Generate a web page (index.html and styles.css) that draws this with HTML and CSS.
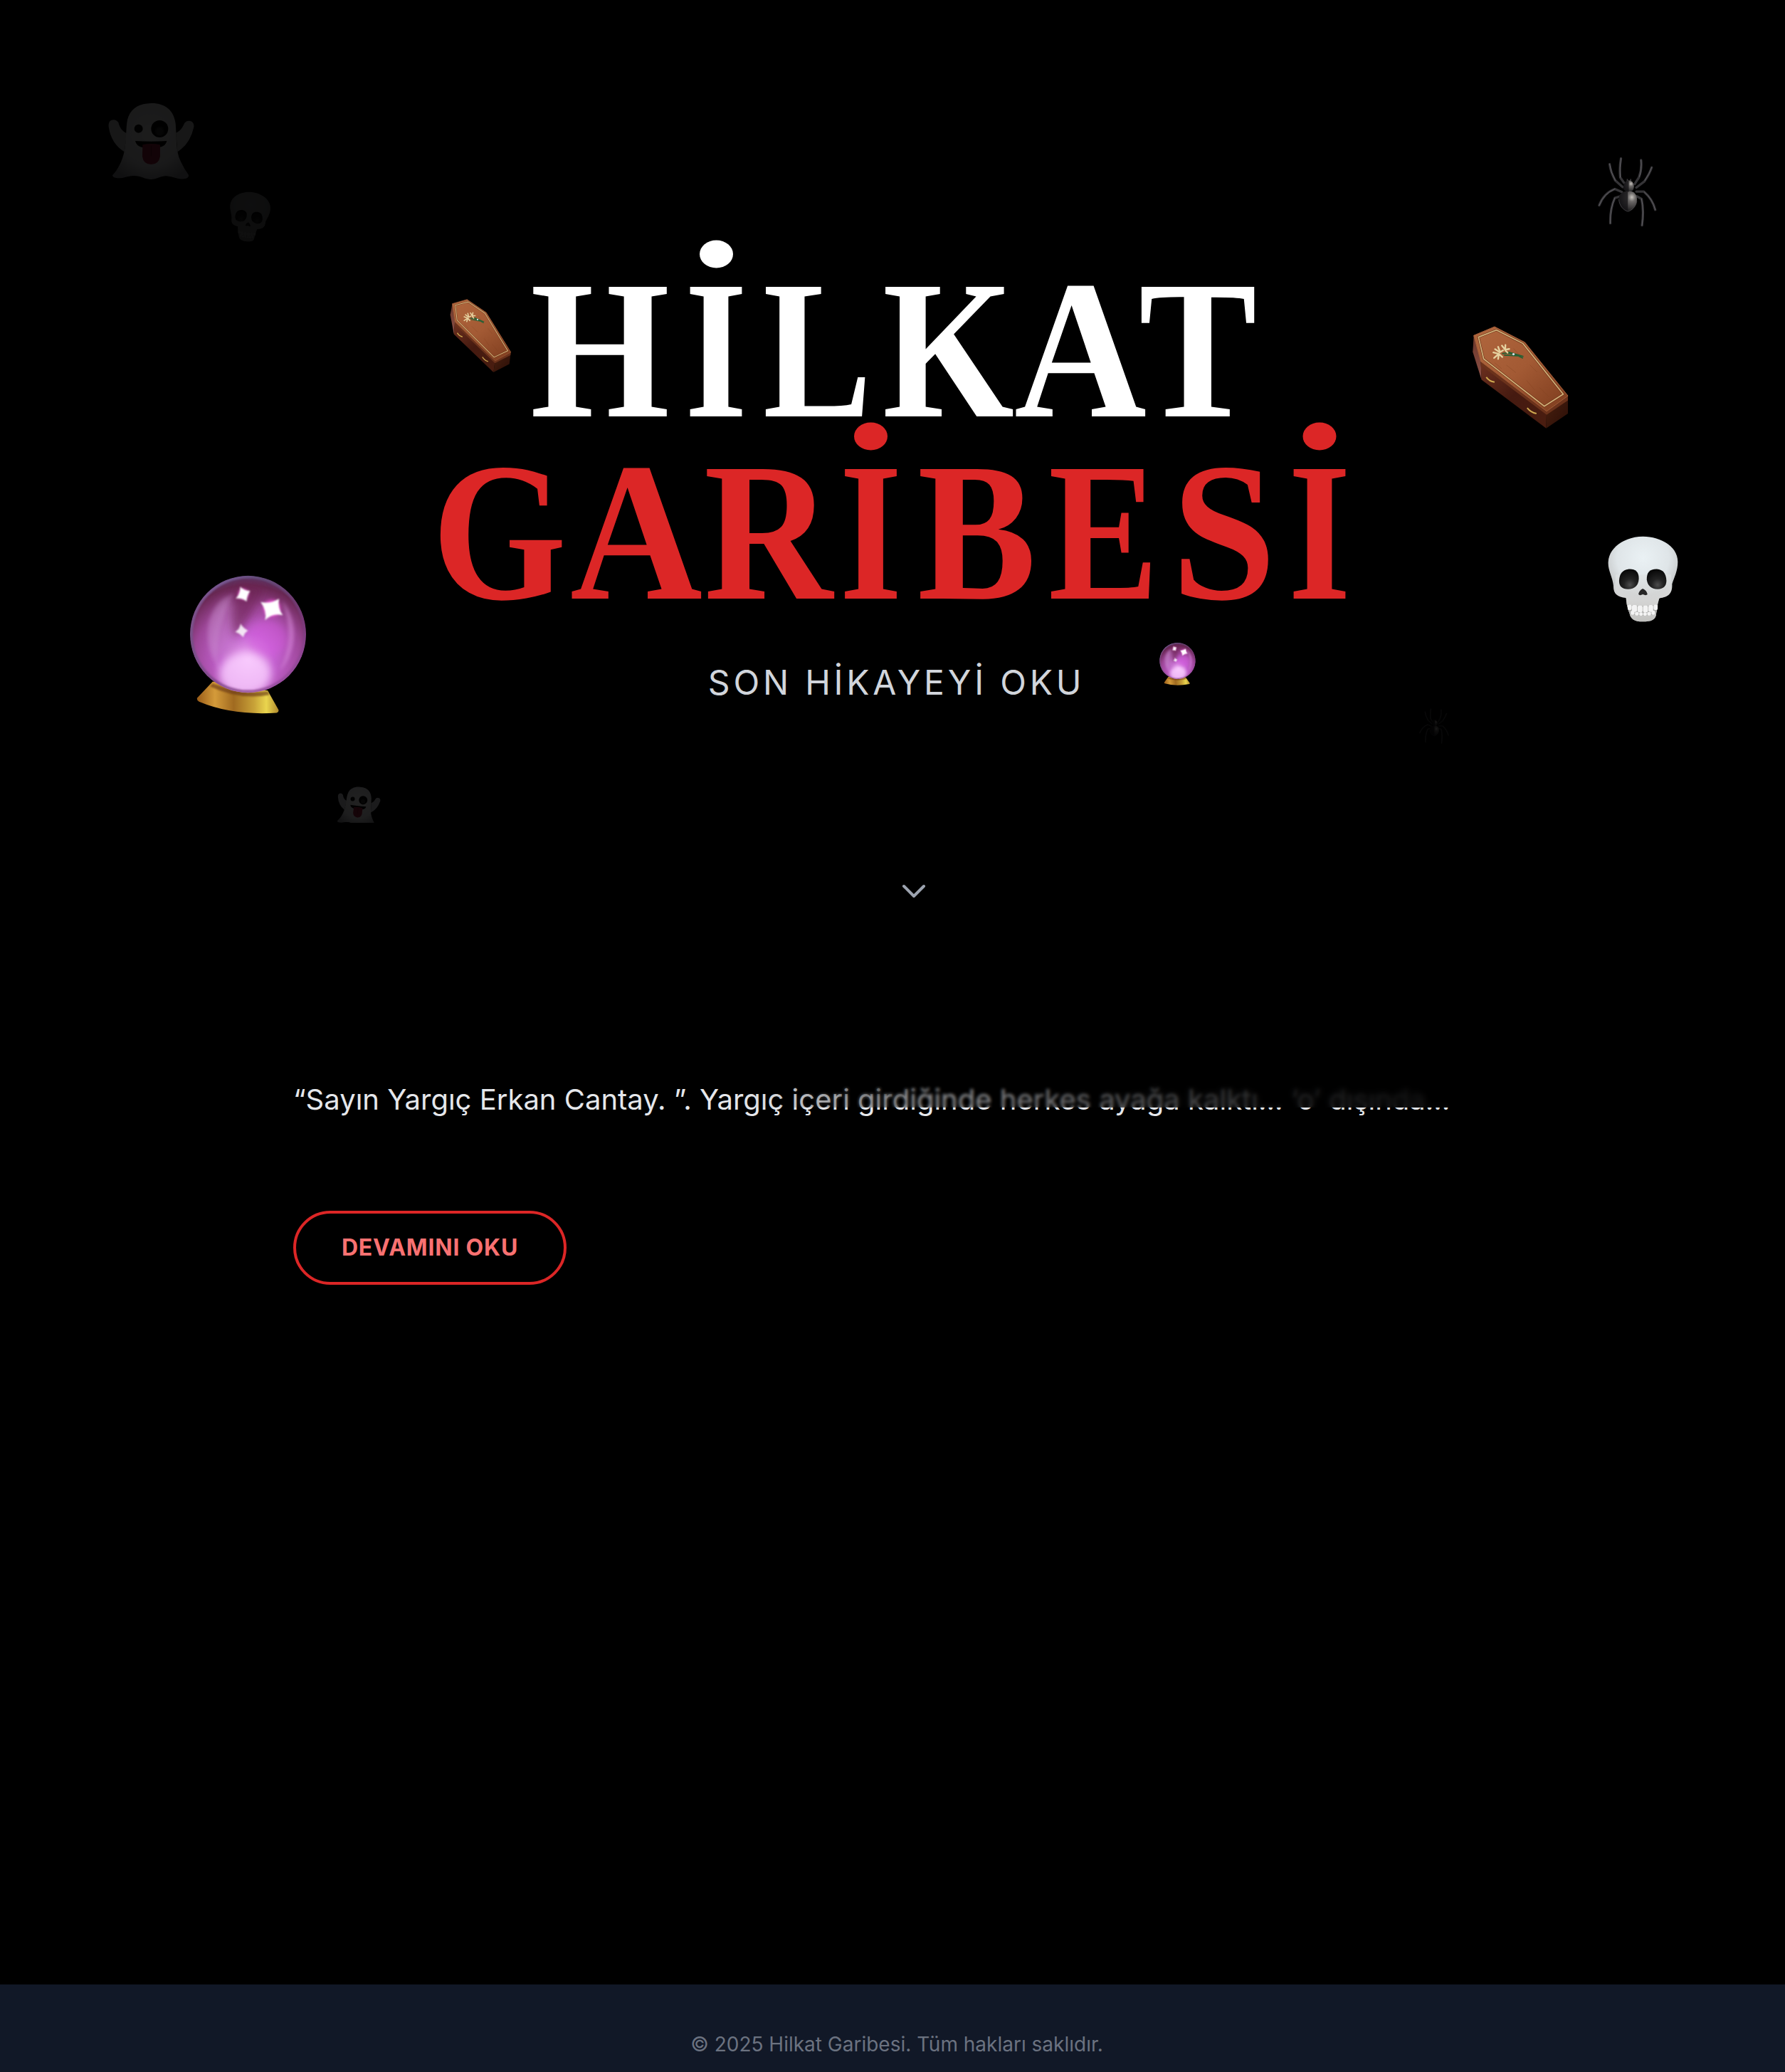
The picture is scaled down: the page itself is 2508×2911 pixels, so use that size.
FILE: index.html
```html
<!DOCTYPE html>
<html lang="tr">
<head>
<meta charset="utf-8">
<title>Hilkat Garibesi</title>
<link rel="stylesheet" href="styles.css">
</head>
<body>
<svg class="defs" width="0" height="0" aria-hidden="true">
  <defs>
    <filter id="soft2" x="-30%" y="-30%" width="160%" height="160%"><feGaussianBlur stdDeviation="3"/></filter>
    <filter id="soft6" x="-50%" y="-50%" width="200%" height="200%"><feGaussianBlur stdDeviation="8"/></filter>
    <filter id="soft18" x="-50%" y="-50%" width="200%" height="200%"><feGaussianBlur stdDeviation="18"/></filter>
    <radialGradient id="ghostBody" cx=".5" cy=".4" r=".65"><stop offset="0" stop-color="#fff"/><stop offset=".65" stop-color="#e4e4e8"/><stop offset="1" stop-color="#96969c"/></radialGradient>
    <radialGradient id="skullTop" gradientUnits="userSpaceOnUse" cx="265" cy="190" r="200"><stop offset="0" stop-color="#eaf1f4"/><stop offset=".55" stop-color="#dfe5e8"/><stop offset=".8" stop-color="#c9cccd"/><stop offset="1" stop-color="#d8d8d8"/></radialGradient>
    <linearGradient id="skullJaw" x1="0" y1="0" x2="0" y2="1"><stop offset="0" stop-color="#dfe3e4"/><stop offset=".55" stop-color="#d5d5d4"/><stop offset="1" stop-color="#b9b9b6"/></linearGradient>
    <radialGradient id="socket" cx=".55" cy=".78" r=".75"><stop offset="0" stop-color="#4c4c4c"/><stop offset=".4" stop-color="#222"/><stop offset="1" stop-color="#080808"/></radialGradient>
    <linearGradient id="lid" x1="0" y1="0" x2="1" y2="1"><stop offset="0" stop-color="#b0663d"/><stop offset=".5" stop-color="#a35a34"/><stop offset="1" stop-color="#7c3b1d"/></linearGradient>
    <linearGradient id="coffinFront" x1="0" y1="0" x2="1" y2="1"><stop offset="0" stop-color="#6d301f"/><stop offset=".5" stop-color="#451a10"/><stop offset="1" stop-color="#4a1d10"/></linearGradient>
    <linearGradient id="coffinHead" x1="0" y1="0" x2="0" y2="1"><stop offset="0" stop-color="#6a3527"/><stop offset="1" stop-color="#8c5148"/></linearGradient>
    <linearGradient id="coffinFoot" x1="0" y1="0" x2="1" y2="1"><stop offset="0" stop-color="#4a200f"/><stop offset="1" stop-color="#2a0e07"/></linearGradient>
    <radialGradient id="orb" gradientUnits="userSpaceOnUse" cx="327" cy="440" r="370"><stop offset="0" stop-color="#efb0f4"/><stop offset=".3" stop-color="#c462d0"/><stop offset=".62" stop-color="#9c4697"/><stop offset=".85" stop-color="#682752"/><stop offset="1" stop-color="#554070"/></radialGradient>
    <linearGradient id="orbRim" x1="0" y1="0" x2="1" y2="1"><stop offset="0" stop-color="#a27bd0"/><stop offset=".3" stop-color="#675782"/><stop offset=".7" stop-color="#7a3c80"/><stop offset="1" stop-color="#a057ac"/></linearGradient>
    <linearGradient id="gold" x1="0" y1="0" x2="1" y2="0"><stop offset="0" stop-color="#9a5c18"/><stop offset=".22" stop-color="#d49b3a"/><stop offset=".45" stop-color="#a06a20"/><stop offset=".7" stop-color="#c8a238"/><stop offset=".85" stop-color="#ead54e"/><stop offset="1" stop-color="#b08a2c"/></linearGradient>
    <clipPath id="orbClip"><ellipse cx="327" cy="332" rx="245" ry="247"/></clipPath>
    <clipPath id="capsTop"><rect x="0" y="74" width="1320" height="220"/></clipPath>
    <clipPath id="capsBottom"><rect x="0" y="330" width="1320" height="220"/></clipPath>
    <radialGradient id="abdomen" cx=".72" cy=".3" r=".7"><stop offset="0" stop-color="#c6c2bd"/><stop offset=".3" stop-color="#6d6a69"/><stop offset="1" stop-color="#1c1b1d"/></radialGradient>

    <symbol id="ghost" viewBox="60 66 375 336">
      <path d="M145 202C121 192 114 174 109 156Q97 139 78 147Q66 154 68 174Q78 245 134 280ZM352 200C374 190 380 174 388 158Q399 144 418 152Q429 160 427 176Q411 247 358 280Z" fill="#cfcfd3"/>
      <path d="M247 75C306 74 343 105 350 160C356 230 350 275 371 319Q386 352 405 377Q407 388 392 393C357 399 334 381 307 382C281 385 273 395 247 396C219 396 205 380 171 381C146 382 130 392 105 391Q85 389 84 379C105 357 126 320 135 273C145 215 139 161 151 132C166 94 200 76 247 75Z" fill="url(#ghostBody)"/>
      <circle cx="194" cy="182" r="18" fill="#111"/><circle cx="283" cy="183" r="36" fill="#080808"/><circle cx="283" cy="194" r="18" fill="#333" filter="url(#soft2)"/>
      <path d="M180 234Q247 239 313 234Q310 257 278 262H212Q184 256 180 234Z" fill="#080808"/>
      <path d="M211 250Q246 242 285 250V299Q279 333 247 333Q214 332 210 299Z" fill="#a5213f"/><path d="M247 254V298" stroke="#701329" stroke-width="4"/>
    </symbol>

    <symbol id="skull" viewBox="110 92 310 374">
      <path d="M265 99C340 99 413 142 412 207C412 245 397 272 388 300C390 335 378 354 334 360C324 386 326 402 321 424C320 452 299 459 264 459C228 459 212 447 208 424Q195 394 193 359C157 355 139 342 140 307C136 269 116 241 118 207C121 142 193 99 265 99Z" fill="url(#skullTop)"/>
      <path d="M150 260C145 310 139 340 193 359Q195 394 208 424C212 447 228 459 264 459C299 459 320 452 321 424Q324 392 334 360C388 354 389 330 384 260Z" fill="url(#skullJaw)" opacity=".75"/>
      <path d="M206 237C235 236 249 251 247 281Q244 319 202 322Q163 320 164 286Q166 240 206 237Z" fill="url(#socket)"/>
      <path d="M324 237C294 236 280 251 281 281Q285 319 327 322Q364 320 364 286Q362 240 324 237Z" fill="url(#socket)"/>
      <path d="M264 320Q247 329 246 344Q251 351 264 344Q278 351 284 344Q281 328 264 320Z" fill="#262626"/>
      <path d="M199 387Q265 398 328 387L324 412L317 429Q264 439 211 429L203 409Z" fill="#aaaaa8"/>
      <g fill="#f3f3f3"><rect x="200" y="387" width="17" height="23" rx="6"/><rect x="218" y="389" width="22" height="29" rx="7"/><rect x="242" y="391" width="21" height="29" rx="7"/><rect x="265" y="391" width="21" height="29" rx="7"/><rect x="288" y="389" width="20" height="29" rx="7"/><rect x="310" y="387" width="17" height="23" rx="6"/><rect x="213" y="413" width="16" height="17" rx="5"/><rect x="231" y="418" width="16" height="15" rx="5"/><rect x="249" y="420" width="15" height="14" rx="5"/><rect x="266" y="420" width="15" height="14" rx="5"/><rect x="283" y="418" width="16" height="15" rx="5"/><rect x="301" y="413" width="15" height="17" rx="5"/></g>
    </symbol>

    <symbol id="spider" viewBox="128 88 260 304">
      <g fill="none" stroke="#343336" stroke-width="10" stroke-linecap="round" stroke-linejoin="round">
        <path d="M238 220L207 192Q187 157 183 123M244 202L228 179Q224 138 231 99M289 207L307 179Q320 145 316 106M296 222L330 196Q352 164 361 137M235 241L205 228Q158 246 139 297M228 259L205 266Q184 312 186 373M296 239L328 239Q365 271 376 316M298 259L318 270Q329 319 320 382"/>
      </g>
      <g fill="none" stroke="#5f5d62" stroke-width="3" stroke-linecap="round"><path d="M207 192Q187 157 183 123M228 179Q224 138 231 99M309 176Q320 145 316 106M332 192Q352 164 361 137M205 228Q158 246 139 297M205 266Q184 312 186 373M330 241Q365 271 376 316M318 270Q329 319 320 382"/></g>
      <path d="M258 197V186M272 197V186" stroke="#3d3b3e" stroke-width="5"/>
      <path d="M264 191Q286 195 286 220Q284 240 264 241Q242 238 241 221Q245 194 264 191Z" fill="url(#abdomen)"/>
      <path d="M261 237C289 236 301 254 298 279C295 303 276 320 260 323C242 318 224 299 222 274C221 250 237 238 261 237Z" fill="url(#abdomen)"/>
      <path d="M260 237C237 238 221 250 222 274C224 299 242 318 260 323ZM264 191Q245 194 241 221Q242 237 264 241Z" fill="#141315" opacity=".75"/>
      <path d="M222 272C224 299 242 318 260 323C276 320 295 303 298 279" fill="none" stroke="#555356" stroke-width="2"/>
    </symbol>

    <symbol id="coffin" viewBox="82 52 416 442">
      <path d="M92 95L88 165L125 282L122 205Z" fill="url(#coffinHead)"/>
      <path d="M122 205L400 415L398 487L125 282Z" fill="url(#coffinFront)"/>
      <path d="M400 415L490 350V425L398 487Z" fill="url(#coffinFoot)"/>
      <path d="M400 415L490 350V369L400 430L122 221V205Z" fill="#6b321b"/>
      <path d="M92 95L180 58L308 124L490 350L400 415L122 205Z" fill="url(#lid)" stroke="#a45d38" stroke-width="3" stroke-linejoin="round"/>
      <path d="M112 102L188 72L300 129L470 343L390 394L134 194Z" fill="none" stroke="#6e3218" stroke-width="9"/>
      <path d="M112 102L188 72L300 129L470 343L390 394L134 194Z" fill="none" stroke="#d2b27a" stroke-width="5"/>
      <g stroke="#7d401f" stroke-width="2" opacity=".5"><path d="M230 220L270 252M260 150L300 193M315 285L350 325M370 315L410 355M180 210L210 235M330 220L360 250"/></g>
      <path d="M145 271Q158 289 180 292M318 401Q333 420 357 425" fill="none" stroke="#d0aa50" stroke-width="6"/>
      <path d="M212 172Q245 163 300 191M220 178L290 182M238 165L302 184" fill="none" stroke="#246034" stroke-width="5"/>
      <path d="M198 173L175 167M198 173L178 190M198 175L195 194M200 174L213 186M202 166L182 153M203 164L195 143M204 165L216 158M224 154L211 138M225 154L226 135M226 155L242 152M225 157L235 168" stroke="#e6d2a0" stroke-width="7" stroke-linecap="round"/>
      <circle cx="260" cy="174" r="5" fill="#d7dde8"/>
    </symbol>

    <symbol id="ball" viewBox="76 80 502 594">
      <path d="M178 532L113 600Q108 610 120 617Q260 676 448 664Q459 660 455 650L410 570Z" fill="url(#gold)"/>
      <path d="M178 540Q300 590 410 572L418 588Q290 612 166 552Z" fill="#6c3a12" opacity=".65" filter="url(#soft2)"/>
      <g clip-path="url(#orbClip)">
        <ellipse cx="327" cy="332" rx="245" ry="247" fill="url(#orb)"/>
        <ellipse cx="230" cy="310" rx="62" ry="130" transform="rotate(8 230 310)" fill="#c389c6" opacity=".38" filter="url(#soft18)"/>
        <path d="M270 160C160 190 110 350 210 490Q170 330 270 160Z" fill="#d4a0dc" opacity=".25" filter="url(#soft6)"/>
        <path d="M470 190C540 270 540 400 460 490Q530 340 470 190Z" fill="#e49be8" opacity=".45" filter="url(#soft6)"/>
        <path d="M290 110Q240 220 270 350Q350 250 400 130Z" fill="#6b234f" opacity=".6" filter="url(#soft18)"/>
        <ellipse cx="410" cy="350" rx="85" ry="80" fill="#d55ce0" opacity=".5" filter="url(#soft18)"/>
        <ellipse cx="315" cy="500" rx="110" ry="90" fill="#fad0ff" opacity=".8" filter="url(#soft18)"/>
        <ellipse cx="327" cy="332" rx="240" ry="242" fill="none" stroke="url(#orbRim)" stroke-width="13" opacity=".7" filter="url(#soft2)"/>
      </g>
      <g fill="#f151d8" filter="url(#soft6)"><circle cx="428" cy="222" r="34"/><circle cx="307" cy="162" r="20"/></g>
      <g fill="#fff" filter="url(#soft2)"><path d="M458 182Q450 220 474 252Q430 240 399 273Q408 235 380 196Q420 205 458 182Z"/><path d="M294 131Q308 148 336 149Q322 168 321 194Q302 178 275 181Q294 163 294 131Z"/><path d="M295 287Q306 306 327 317Q311 326 307 345Q293 329 273 322Q294 309 295 287Z" opacity=".85"/></g>
    </symbol>
  </defs>
</svg>

<main class="page">
  <section class="hero">
    <h1 class="title">
      <svg class="title-art" viewBox="0 0 1320 560" role="img" aria-label="HİLKAT GARİBESİ">
        <g class="title-top">
          <text y="265" clip-path="url(#capsTop)"><tspan x="145" textLength="196" lengthAdjust="spacingAndGlyphs">H</tspan><tspan x="362" textLength="88" lengthAdjust="spacingAndGlyphs">İ</tspan><tspan x="472" textLength="153" lengthAdjust="spacingAndGlyphs">L</tspan><tspan x="640" textLength="185" lengthAdjust="spacingAndGlyphs">K</tspan><tspan x="825" textLength="186" lengthAdjust="spacingAndGlyphs">A</tspan><tspan x="1000" textLength="166" lengthAdjust="spacingAndGlyphs">T</tspan></text>
          <ellipse cx="406.500" cy="37" rx="23.500" ry="19.500"/>
        </g>
        <g class="title-bottom">
          <text y="521" clip-path="url(#capsBottom)"><tspan x="7" textLength="189" lengthAdjust="spacingAndGlyphs">G</tspan><tspan x="201" textLength="186" lengthAdjust="spacingAndGlyphs">A</tspan><tspan x="389" textLength="181" lengthAdjust="spacingAndGlyphs">R</tspan><tspan x="579.500" textLength="88" lengthAdjust="spacingAndGlyphs">İ</tspan><tspan x="689" textLength="167" lengthAdjust="spacingAndGlyphs">B</tspan><tspan x="873" textLength="155" lengthAdjust="spacingAndGlyphs">E</tspan><tspan x="1046" textLength="147" lengthAdjust="spacingAndGlyphs">S</tspan><tspan x="1210" textLength="88" lengthAdjust="spacingAndGlyphs">İ</tspan></text>
          <ellipse cx="623.500" cy="293" rx="23.500" ry="19.500"/>
          <ellipse cx="1254" cy="293" rx="23.500" ry="19.500"/>
        </g>
      </svg>
    </h1>
    <p class="subtitle">SON HİKAYEYİ OKU</p>
    <svg class="chevron" viewBox="0 0 36 24"><path d="M4 4L18 18L32 4"/></svg>

    <svg class="float ghost-a"><use href="#ghost"/></svg>
    <svg class="float skull-a"><use href="#skull"/></svg>
    <svg class="float spider-a"><use href="#spider"/></svg>
    <svg class="float coffin-a"><use href="#coffin"/></svg>
    <svg class="float coffin-b"><use href="#coffin"/></svg>
    <svg class="float skull-b"><use href="#skull"/></svg>
    <svg class="float ball-a"><use href="#ball"/></svg>
    <svg class="float ball-b"><use href="#ball"/></svg>
    <svg class="float spider-b"><use href="#spider"/></svg>
    <svg class="float ghost-b"><use href="#ghost"/></svg>
  </section>

  <section class="story">
    <div class="excerpt">
      <p class="excerpt-text">“Sayın Yargıç Erkan Cantay. ”. Yargıç içeri girdiğinde herkes ayağa kalktı... ‘o’ dışında...</p>
      <div class="veil veil-light"></div>
      <div class="veil veil-heavy"></div>
      <div class="veil veil-shade"></div>
    </div>
    <a class="read-more">DEVAMINI OKU</a>
  </section>
</main>
<footer class="footer">© 2025 Hilkat Garibesi. Tüm hakları saklıdır.</footer>
</body>
</html>
```

FILE: styles.css
```css
* { box-sizing: border-box; }
body {
  margin: 0;
  height: 2911px;
  display: flex;
  flex-direction: column;
  background: #000;
  color: #e5e7eb;
  font-family: Inter, "Liberation Sans", sans-serif;
  overflow: hidden;
}
.defs { position: absolute; }
.page { height: 2788px; flex: none; }

.hero {
  position: relative;
  height: 1398px;
  padding-top: 320px;
  display: flex;
  flex-direction: column;
  align-items: center;
}
.title { margin: 0; line-height: 0; }
.title-art { width: 1320px; height: 560px; margin-left: 12px; overflow: visible; }
.title-art text {
  font-family: "Liberation Serif", serif;
  font-weight: 700;
  font-size: 278px;
}
.title-top { fill: #fff; }
.title-bottom { fill: #dc2626; }
.subtitle {
  margin: 49px 0 0;
  padding-left: 11px;
  font-size: 48px;
  line-height: 60px;
  font-weight: 400;
  letter-spacing: 4.8px;
  color: #d1d5db;
  white-space: nowrap;
}
.chevron {
  width: 36px;
  height: 24px;
  margin: 252px 0 0 60px;
  fill: none;
  stroke: #9ca3af;
  stroke-width: 4;
  stroke-linecap: round;
  stroke-linejoin: round;
}

.float { position: absolute; overflow: visible; }
.ghost-a { left: 150px; top: 142px; width: 125px; height: 112px; opacity: .11; }
.skull-a { left: 320px; top: 268px; width: 60px; height: 73px; opacity: .06; transform: rotate(7deg); }
.spider-a { left: 2243px; top: 219px; width: 87px; height: 101px; }
.coffin-a { left: 2067px; top: 457px; width: 139px; height: 147px; }
.coffin-b { left: 628px; top: 422px; width: 94px; height: 100px; transform: rotate(7deg); }
.skull-b { left: 2257px; top: 751px; width: 103px; height: 125px; }
.ball-a { left: 265px; top: 807px; width: 167px; height: 198px; }
.ball-b { left: 1629px; top: 902px; width: 52px; height: 62px; transform: rotate(-7deg); }
.spider-b { left: 1993px; top: 994px; width: 44px; height: 52px; opacity: .12; }
.ghost-b {
  left: 472px;
  top: 1104px;
  width: 63px;
  height: 56px;
  opacity: .13;
  transform: rotate(6deg);
  clip-path: polygon(0 0, 100% 0, 100% 87%, 0 99%);
}

.story {
  padding: 118px 412px 0;
  display: flex;
  flex-direction: column;
  align-items: flex-start;
}
.excerpt { position: relative; }
.excerpt-text {
  margin: 0;
  font-size: 40px;
  line-height: 58px;
  white-space: nowrap;
}
.veil { position: absolute; left: 620px; right: -30px; top: -20px; height: 60px; }
.veil-light {
  backdrop-filter: blur(2px);
  -webkit-mask-image: linear-gradient(to right, transparent 5%, #000 26%);
  mask-image: linear-gradient(to right, transparent 5%, #000 26%);
}
.veil-heavy {
  backdrop-filter: blur(5px);
  -webkit-mask-image: linear-gradient(to right, transparent 35%, #000 95%);
  mask-image: linear-gradient(to right, transparent 35%, #000 95%);
}
.veil-shade {
  background: linear-gradient(to right, transparent, rgba(0,0,0,.12) 10%, rgba(0,0,0,.3) 22%, rgba(0,0,0,.43) 38%, rgba(0,0,0,.56) 55%, rgba(0,0,0,.76) 75%, rgba(0,0,0,.9));
}
.read-more {
  margin-top: 127px;
  padding-bottom: 1px;
  width: 384px;
  height: 104px;
  border: 4px solid #dc2626;
  border-radius: 52px;
  display: flex;
  align-items: center;
  justify-content: center;
  font-size: 32px;
  font-weight: 700;
  letter-spacing: .8px;
  color: #f87171;
  white-space: nowrap;
}
.footer {
  flex: none;
  height: 123px;
  padding: 64px 0 0 12px;
  background: #111827;
  color: #6b7280;
  font-size: 28px;
  line-height: 40px;
  text-align: center;
}
```
